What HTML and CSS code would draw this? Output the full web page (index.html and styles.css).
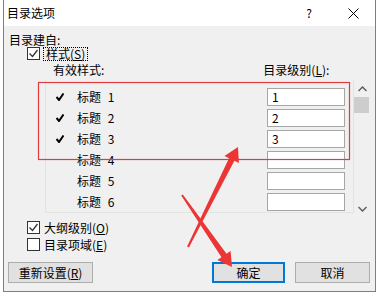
FILE: index.html
```html
<!DOCTYPE html>
<html lang="zh-CN">
<head>
    <meta charset="UTF-8">
    <title>目录选项</title>
    <link rel="stylesheet" href="styles.css">
</head>
<body>

    <div class="window">
        <!-- Title bar -->
        <div class="titlebar">
            <span class="title">目录选项</span>
            <span class="help">?</span>
            <span class="close">
                <svg width="11" height="11" viewBox="0 0 11 11"><path d="M0.5 0.5 L10.5 10.5 M10.5 0.5 L0.5 10.5" stroke="#000" stroke-width="1" fill="none"/></svg>
            </span>
        </div>

        <div class="dialog">
            <div class="group-label">目录建自:</div>

            <div class="check-row first">
                <span class="box"><svg width="11" height="11" viewBox="0 0 11 11"><path d="M1.5 5.5 L4.5 8.5 L9.5 2" stroke="#333" stroke-width="1.3" fill="none"/></svg></span>
                <span class="focus">样式(<u>S</u>)</span>
            </div>

            <div class="col-head">
                <span class="head-styles">有效样式:</span>
                <span class="head-level">目录级别(<u>L</u>):</span>
            </div>

            <div class="list">
                <div class="rows">
                    <div class="row"><span class="tick"><svg width="8" height="8" viewBox="0 0 8 8"><path d="M0.5 4 L3 7 L7.5 0.5" stroke="#000" stroke-width="2" fill="none"/></svg></span><span class="name">标题 1</span><span class="level">1</span></div>
                    <div class="row"><span class="tick"><svg width="8" height="8" viewBox="0 0 8 8"><path d="M0.5 4 L3 7 L7.5 0.5" stroke="#000" stroke-width="2" fill="none"/></svg></span><span class="name">标题 2</span><span class="level">2</span></div>
                    <div class="row"><span class="tick"><svg width="8" height="8" viewBox="0 0 8 8"><path d="M0.5 4 L3 7 L7.5 0.5" stroke="#000" stroke-width="2" fill="none"/></svg></span><span class="name">标题 3</span><span class="level">3</span></div>
                    <div class="row"><span class="tick"></span><span class="name">标题 4</span><span class="level"></span></div>
                    <div class="row"><span class="tick"></span><span class="name">标题 5</span><span class="level"></span></div>
                    <div class="row"><span class="tick"></span><span class="name">标题 6</span><span class="level"></span></div>
                </div>
                <div class="scrollbar">
                    <span class="arrow up"><svg width="9" height="6" viewBox="0 0 9 6"><path d="M0.5 5 L4.5 1 L8.5 5" stroke="#606060" stroke-width="1.5" fill="none"/></svg></span>
                    <span class="thumb"></span>
                    <span class="arrow down"><svg width="9" height="6" viewBox="0 0 9 6"><path d="M0.5 1 L4.5 5 L8.5 1" stroke="#606060" stroke-width="1.5" fill="none"/></svg></span>
                </div>
            </div>

            <div class="check-row outline">
                <span class="box"><svg width="11" height="11" viewBox="0 0 11 11"><path d="M1.5 5.5 L4.5 8.5 L9.5 2" stroke="#333" stroke-width="1.3" fill="none"/></svg></span>
                <span class="text">大纲级别(<u>O</u>)</span>
            </div>
            <div class="check-row">
                <span class="box"></span>
                <span class="text">目录项域(<u>E</u>)</span>
            </div>

            <div class="buttons">
                <button class="btn reset">重新设置(<u>R</u>)</button>
                <button class="btn ok">确定</button>
                <button class="btn">取消</button>
            </div>
        </div>
    </div>

    <!-- Red annotations drawn over the dialog -->
    <svg class="annot" width="379" height="294" viewBox="0 0 379 294">
        <rect x="38.5" y="82.5" width="311" height="77" fill="none" stroke="#e23b3f" stroke-width="1.2"/>
        <polygon points="187.1,246.6 229,158.2 224.5,155.9 238,147 238.9,163.1 234.4,160.8 188.9,247.4" fill="#ec3535"/>
        <polygon points="182.8,194.4 226.5,253.8 230.6,250.9 232,267 217.4,260.1 221.5,257.2 181.2,195.6" fill="#ec3535"/>
    </svg>

</body>
</html>
```

FILE: styles.css
```css
/* Global */
body {
    margin: 0;
    background: #fff;
    font-family: "Noto Sans CJK SC", "Microsoft YaHei", sans-serif;
    font-size: 12px;
    color: #000;
    position: relative;
    width: 379px;
    height: 294px;
    overflow: hidden;
}

u {
    text-decoration: underline;
    text-underline-offset: 1px;
}

.window {
    margin-left: 3px;
    width: 371px;
    height: 291px;
    border: 1px solid #3f8de0;
    border-top: none;
    display: flex;
    flex-direction: column;
}

/* Title bar */
.titlebar {
    height: 26px;
    background: #fff;
    display: flex;
    align-items: center;
    padding: 0 7px 0 3px;
}

.title {
    line-height: 16px;
}

.help {
    margin-left: auto;
    width: 20px;
    text-align: center;
    line-height: 16px;
}

.close {
    margin-left: 19px;
    width: 30px;
    display: flex;
    justify-content: center;
}

/* Dialog body */
.dialog {
    flex: 1;
    background: #f0f0f0;
    padding: 7px 5px 0 5px;
    display: flex;
    flex-direction: column;
}

.group-label {
    height: 13px;
    line-height: 13px;
}

.check-row {
    display: flex;
    align-items: center;
    height: 17px;
    margin-left: 18px;
    line-height: 14px;
}

.check-row.first {
    height: 13px;
    margin-top: 1px;
}

.box {
    width: 11px;
    height: 11px;
    border: 1px solid #333;
    background: #fff;
    flex: none;
}

.box svg {
    display: block;
}

.focus {
    margin-left: 3px;
    border: 1px dotted #000;
    padding: 0 2px;
    line-height: 12px;
}

.text {
    margin-left: 4px;
}

.col-head {
    display: flex;
    height: 14px;
    line-height: 14px;
    margin-top: 3px;
}

.head-styles {
    margin-left: 44px;
}

.head-level {
    margin-left: 159px;
}

/* List of styles */
.list {
    display: flex;
    height: 133px;
    margin: 3px 0 0 36px;
}

.rows {
    flex: 1;
    border: 1px solid #e3e3e3;
    border-top: none;
    padding-top: 6px;
}

.row {
    display: flex;
    align-items: center;
    height: 21px;
}

.tick {
    width: 8px;
    height: 8px;
    margin-left: 10px;
    flex: none;
}

.tick svg {
    display: block;
}

.name {
    margin-left: 13px;
    flex: 1;
    word-spacing: 4px;
}

.level {
    width: 72px;
    height: 16px;
    line-height: 16px;
    border: 1px solid #a6a6a6;
    background: #fff;
    padding-left: 4px;
    margin-right: 8px;
}

.scrollbar {
    width: 16px;
    display: flex;
    flex-direction: column;
}

.arrow {
    height: 17px;
    display: flex;
    justify-content: center;
}

.arrow.up {
    align-items: flex-end;
    padding-bottom: 5px;
    height: 12px;
}

.arrow.down {
    margin-top: auto;
    align-items: center;
    padding-top: 8px;
    height: 9px;
}

.thumb {
    width: 15px;
    height: 16px;
    background: #cdcdcd;
}

.check-row.outline {
    margin-top: 6px;
}

/* Buttons */
.buttons {
    display: flex;
    margin: 9px 0 0 -1px;
}

.btn {
    height: 21px;
    background: #e1e1e1;
    border: 1px solid #adadad;
    font-family: inherit;
    font-size: 12px;
    color: #000;
    padding: 0;
    line-height: 17px;
}

.btn.reset {
    width: 85px;
}

.btn.ok {
    width: 73px;
    margin-left: auto;
    border: 2px solid #0078d7;
}

.btn + .btn:not(.ok) {
    width: 75px;
    margin-left: 10px;
}

/* Annotation overlay */
.annot {
    position: absolute;
    left: 0;
    top: 0;
    pointer-events: none;
}
```
